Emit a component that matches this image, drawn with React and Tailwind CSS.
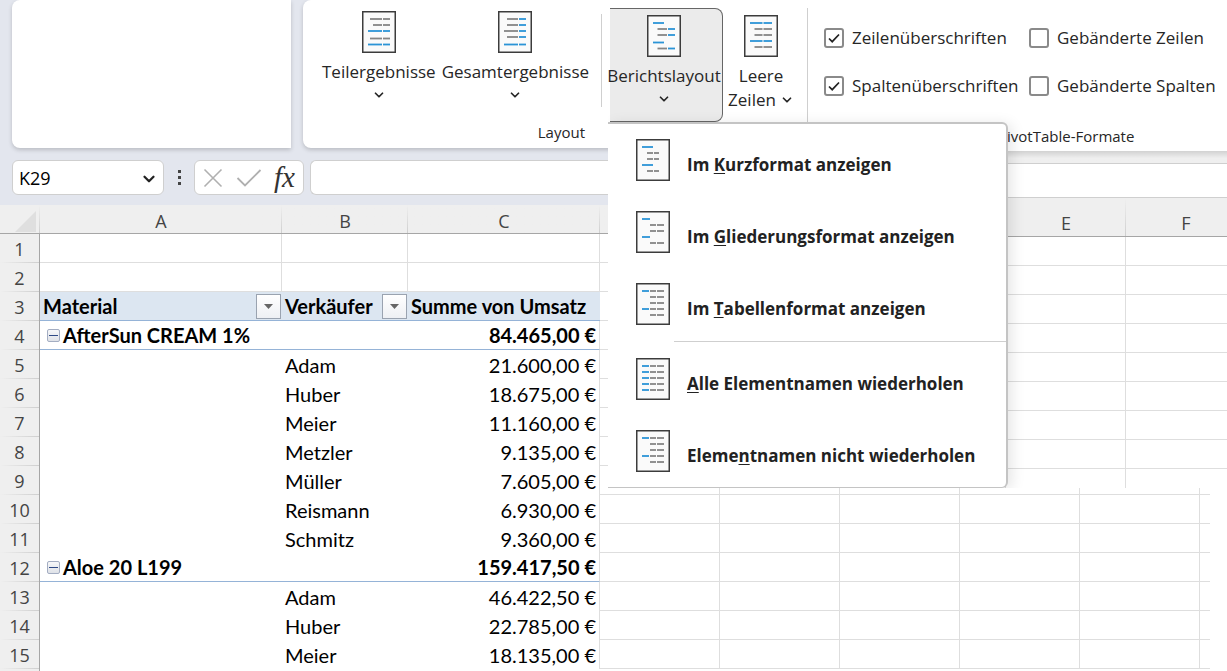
import React from "react";
import { ChevronDown } from "lucide-react";

const BLUE = "#2b94d6";
const GRAY = "#858585";

// every entry is one dash: [x1, x2, y, color]
const row = (y, ...dashes) => dashes.map(([x1, x2, color]) => [x1, x2, y, color]);

const tabular = [
  ...row(8, [6, 13, BLUE], [14, 20, GRAY], [21, 28, GRAY]),
  ...row(14, [14, 20, GRAY], [21, 28, GRAY]),
  ...row(20, [14, 20, GRAY], [21, 28, GRAY]),
  ...row(26, [6, 13, BLUE], [14, 20, GRAY], [21, 28, GRAY]),
  ...row(32, [14, 20, GRAY], [21, 28, GRAY]),
];

const ICONS = {
  subtotals: [
    ...row(8, [8, 20, GRAY], [21, 28, GRAY]),
    ...row(14, [11, 20, GRAY], [21, 28, GRAY]),
    ...row(20, [6, 20, BLUE], [21, 28, BLUE]),
    ...row(27.5, [8, 20, GRAY], [21, 28, GRAY]),
    ...row(33.5, [6, 20, BLUE], [21, 28, BLUE]),
  ],
  totals: [
    ...row(8, [9, 20, GRAY], [21, 28, BLUE]),
    ...row(14, [9, 20, GRAY], [21, 28, BLUE]),
    ...row(20, [6, 20, GRAY], [21, 28, BLUE]),
    ...row(26, [9, 20, GRAY], [21, 28, BLUE]),
    ...row(33.5, [6, 20, BLUE], [21, 28, BLUE]),
  ],
  report: [
    ...row(8, [6, 17, BLUE]),
    ...row(14, [10.5, 20, GRAY], [21, 28, BLUE]),
    ...row(20, [10.5, 20, GRAY], [21, 28, BLUE]),
    ...row(27.5, [6, 17, BLUE]),
    ...row(33.5, [10.5, 20, GRAY], [21, 28, BLUE]),
  ],
  blank: [
    ...row(8, [6, 18.5, BLUE], [19.5, 28, BLUE]),
    ...row(14, [10.5, 18.5, GRAY], [19.5, 28, GRAY]),
    ...row(20, [10.5, 18.5, GRAY], [19.5, 28, GRAY]),
    ...row(26, [6, 18.5, BLUE], [19.5, 28, BLUE]),
    ...row(32, [10.5, 18.5, GRAY], [19.5, 28, GRAY]),
  ],
  compact: [
    ...row(8, [6, 17, BLUE]),
    ...row(14, [11, 17, GRAY], [18, 23, GRAY]),
    ...row(20, [11, 17, GRAY], [18, 23, GRAY]),
    ...row(26, [6, 17, BLUE]),
    ...row(32, [11, 17, GRAY], [18, 23, GRAY]),
  ],
  outline: [
    ...row(8, [6, 14, BLUE]),
    ...row(14, [14, 20, GRAY], [21, 28, GRAY]),
    ...row(20, [14, 20, GRAY], [21, 28, GRAY]),
    ...row(26, [6, 14, BLUE]),
    ...row(32, [14, 20, GRAY], [21, 28, GRAY]),
  ],
  tabular,
  repeat: [8, 14, 20, 26, 32].flatMap((y) =>
    row(y, [6, 13, BLUE], [14, 20, GRAY], [21, 28, GRAY])
  ),
  noRepeat: tabular,
};

function ReportIcon({ name }) {
  return (
    <svg width="34" height="42" viewBox="0 0 34 42" fill="none" className="shrink-0" aria-hidden="true">
      <rect x="0.75" y="0.75" width="32.5" height="40.5" fill="#fafafa" stroke="#3c3c3c" strokeWidth="1.5" />
      {ICONS[name].map(([x1, x2, y, color], i) => (
        <line key={i} x1={x1} x2={x2} y1={y} y2={y} stroke={color} strokeWidth="1.8" />
      ))}
    </svg>
  );
}

function RibbonButton({ icon, label }) {
  return (
    <button type="button" className="flex flex-col items-center whitespace-nowrap">
      <ReportIcon name={icon} />
      <span className="mt-[7px] leading-6">{label}</span>
      <ChevronDown className="mt-1 size-3.5" strokeWidth={3} />
    </button>
  );
}

function CheckOption({ id, label, checked }) {
  return (
    <div className="flex items-center gap-2 leading-6">
      <span className="grid size-5 place-items-center">
        <input
          id={id}
          type="checkbox"
          defaultChecked={checked}
          className="peer col-start-1 row-start-1 size-5 appearance-none rounded-[3px] border-2 border-[#8a8a8a] bg-white"
        />
        <svg
          viewBox="0 0 20 20"
          fill="none"
          className="pointer-events-none invisible col-start-1 row-start-1 size-5 peer-checked:visible"
        >
          <path d="M5 10.5l3.2 3.2L15 6.5" stroke="#222" strokeWidth="1.7" />
        </svg>
      </span>
      <label htmlFor={id} className="whitespace-nowrap">
        {label}
      </label>
    </div>
  );
}

const menuItems = [
  { icon: "compact", before: "Im ", key: "K", after: "urzformat anzeigen" },
  { icon: "outline", before: "Im ", key: "G", after: "liederungsformat anzeigen" },
  { icon: "tabular", before: "Im ", key: "T", after: "abellenformat anzeigen" },
  { icon: "repeat", before: "", key: "A", after: "lle Elementnamen wiederholen", separator: true },
  { icon: "noRepeat", before: "Eleme", key: "n", after: "tnamen nicht wiederholen" },
];

function LayoutMenu() {
  return (
    <div
      role="menu"
      className="absolute top-[122px] left-0 w-[400px] rounded-r-md border-t-2 border-r-2 border-b border-[#c4c4c4] bg-white shadow-[4px_2px_14px_rgba(0,0,0,0.10)]"
    >
      {menuItems.map((item) => (
        <React.Fragment key={item.icon}>
          {item.separator && <div role="separator" className="my-px ml-[66px] h-px bg-[#cfcfcf]" />}
          <button
            type="button"
            role="menuitem"
            className="flex h-[72px] w-full items-center gap-[17px] pl-7 text-left font-bold text-[#222]"
          >
            <ReportIcon name={item.icon} />
            <span className="pt-2.5 whitespace-nowrap">
              {item.before}
              <span className="underline decoration-1 underline-offset-2">{item.key}</span>
              {item.after}
            </span>
          </button>
        </React.Fragment>
      ))}
    </div>
  );
}

const sheetRows = [
  {},
  {},
  { type: "header", a: "Material", b: "Verkäufer", c: "Summe von Umsatz" },
  { type: "group", a: "AfterSun CREAM 1%", c: "84.465,00 €" },
  { type: "item", b: "Adam", c: "21.600,00 €" },
  { type: "item", b: "Huber", c: "18.675,00 €" },
  { type: "item", b: "Meier", c: "11.160,00 €" },
  { type: "item", b: "Metzler", c: "9.135,00 €" },
  { type: "item", b: "Müller", c: "7.605,00 €" },
  { type: "item", b: "Reismann", c: "6.930,00 €" },
  { type: "item", b: "Schmitz", c: "9.360,00 €" },
  { type: "group", a: "Aloe 20 L199", c: "159.417,50 €" },
  { type: "item", b: "Adam", c: "46.422,50 €" },
  { type: "item", b: "Huber", c: "22.785,00 €" },
  { type: "item", b: "Meier", c: "18.135,00 €" },
];

const colHead =
  "border-b border-[#a6a6a6] bg-[linear-gradient(to_bottom,transparent,#cfcfcf)] bg-[length:1px_100%] bg-right bg-no-repeat p-0 pt-1 text-lg leading-6 font-normal";
const rowHead =
  "h-[29px] border-r border-[#a6a6a6] bg-[linear-gradient(to_right,transparent,#cfcfcf)] bg-[length:100%_1px] bg-bottom bg-no-repeat p-0 text-center font-normal text-[#444]";
const gridCell = "h-[29px] border-r border-b border-[#dedede] bg-white p-0";

function FilterButton({ label }) {
  return (
    <button
      type="button"
      aria-label={label}
      className="grid size-[25px] shrink-0 place-items-center border border-[#9aa3b0] bg-linear-to-b from-white to-[#eef0f4]"
    >
      <svg width="9" height="5" viewBox="0 0 9 5">
        <path d="M0 0h9L4.500 5z" fill="#666" />
      </svg>
    </button>
  );
}

function PivotCells({ data }) {
  if (!data.type) {
    return (
      <>
        <td className={gridCell} />
        <td className={gridCell} />
        <td className={gridCell} />
      </>
    );
  }
  if (data.type === "header") {
    const cell = "h-[29px] border-b border-[#95b3d7] bg-[#dce6f1] p-0 pl-[3px] text-left font-bold";
    return (
      <>
        <td className={cell}>
          <div className="flex items-center justify-between pr-px">
            {data.a}
            <FilterButton label="Material filtern" />
          </div>
        </td>
        <td className={cell}>
          <div className="flex items-center justify-between pr-px">
            {data.b}
            <FilterButton label="Verkäufer filtern" />
          </div>
        </td>
        <td className={cell}>{data.c}</td>
      </>
    );
  }
  if (data.type === "group") {
    const cell = "h-[29px] border-b border-[#95b3d7] bg-white p-0 font-bold";
    return (
      <>
        <td className={cell}>
          <div className="flex items-center gap-[3px] pl-[7px]">
            <button
              type="button"
              aria-label="Gruppe reduzieren"
              className="grid size-[13px] place-items-center rounded-xs border border-[#a3adc2] bg-linear-to-b from-[#f6f7f9] to-[#dfe2e8]"
            >
              <span className="h-px w-[9px] bg-[#2f4a86]" />
            </button>
            {data.a}
          </div>
        </td>
        <td className={cell} />
        <td className={`${cell} border-r border-r-[#dedede] pr-[3px] text-right`}>{data.c}</td>
      </>
    );
  }
  return (
    <>
      <td className="h-[29px] bg-white p-0" />
      <td className="h-[29px] bg-white p-0 pl-[3px]">{data.b}</td>
      <td className="h-[29px] border-r border-[#dedede] bg-white p-0 pr-[3px] text-right">{data.c}</td>
    </>
  );
}

function Sheet() {
  return (
    <main className="flex-1 overflow-hidden bg-white">
      <div className="bg-linear-to-r from-[#efefef] from-[1210px] to-white to-[1210px]">
        <table className="w-[1210px] table-fixed border-separate border-spacing-0 font-['Lato',sans-serif] text-[20px] leading-6 text-black">
          <colgroup>
            <col className="w-10" />
            <col className="w-[242px]" />
            <col className="w-[126px]" />
            <col className="w-[192px]" />
            <col className="w-[120px]" />
            <col className="w-[120px]" />
            <col className="w-[120px]" />
            <col className="w-[120px]" />
            <col className="w-[120px]" />
            <col />
          </colgroup>
          <thead className="font-['Open_Sans',sans-serif] text-[#444]">
            <tr>
              <td className={colHead}>
                <svg width="21" height="21" viewBox="0 0 21 21" className="mr-1 ml-auto">
                  <path d="M21 0v21H0z" fill="#dfdfdf" />
                </svg>
              </td>
              <th className={colHead}>A</th>
              <th className={colHead}>B</th>
              <th className={colHead}>C</th>
              {[0, 1, 2, 3, 4, 5].map((n) => (
                <td key={n} className={colHead} />
              ))}
            </tr>
          </thead>
          <tbody>
            {sheetRows.map((data, i) => (
              <tr key={i}>
                <th className={`${rowHead} font-['Open_Sans',sans-serif] text-lg`}>{i + 1}</th>
                <PivotCells data={data} />
                {[0, 1, 2, 3, 4].map((n) => (
                  <td key={n} className={gridCell} />
                ))}
                <td className="h-[29px] border-b border-[#dedede] bg-white p-0" />
              </tr>
            ))}
          </tbody>
        </table>
      </div>
      <div className="h-8 w-10 border-r border-[#a6a6a6] bg-[#efefef]" />
    </main>
  );
}

function FormulaBar() {
  return (
    <div className="flex h-[57px] items-center pt-0.5 pl-3">
      <div className="relative w-[152px]">
        <select
          aria-label="Namenfeld"
          className="h-[35px] w-full appearance-none rounded-md border border-[#cfcfcf] bg-white pl-1.5 text-lg text-black"
        >
          <option>K29</option>
        </select>
        <ChevronDown className="pointer-events-none absolute top-2.5 right-1.5 size-[18px] text-[#222]" strokeWidth={3} />
      </div>
      <div className="flex w-[30px] flex-col items-center gap-[3px]">
        <span className="size-[3px] bg-[#444]" />
        <span className="size-[3px] bg-[#444]" />
        <span className="size-[3px] bg-[#444]" />
      </div>
      <div className="flex h-[35px] w-[110px] items-center justify-between rounded-md border border-[#cfcfcf] bg-white px-2">
        <button type="button" aria-label="Abbrechen">
          <svg width="20" height="20" viewBox="0 0 20 20" fill="none" stroke="#b0b0b0" strokeWidth="1.6">
            <path d="M1.500 1.500l17 17M18.500 1.500l-17 17" />
          </svg>
        </button>
        <button type="button" aria-label="Eingeben">
          <svg width="26" height="20" viewBox="0 0 26 20" fill="none" stroke="#b0b0b0" strokeWidth="1.800">
            <path d="M1.500 10l7.500 7.500L24.500 2" />
          </svg>
        </button>
        <button type="button" className="font-['Liberation_Serif',serif] text-[29px] leading-none text-[#333] italic">
          fx
        </button>
      </div>
      <input
        type="text"
        aria-label="Bearbeitungsleiste"
        className="ml-1.5 h-[35px] min-w-0 flex-1 rounded-l-md border border-r-0 border-[#cfcfcf] bg-white"
      />
    </div>
  );
}

// right part of the window with the opened "Berichtslayout" menu
function ReportLayoutPanel() {
  return (
    <section className="absolute top-0 right-0 left-[608px] h-[488px] overflow-hidden bg-white">
      <div className="h-[151px] pt-2 pl-0.5">
        <div className="flex h-[114px]">
          <div className="flex w-[113px] justify-center rounded-r-lg border border-l-0 border-[#666] bg-[#ebebeb] pt-1.5 pr-1">
            <RibbonButton icon="report" label="Berichtslayout" />
          </div>
          <button type="button" className="mt-[7px] flex w-[76px] flex-col items-center self-start leading-6">
            <ReportIcon name="blank" />
            <span className="mt-[7px]">Leere</span>
            <span className="flex items-center gap-1">
              Zeilen <ChevronDown className="size-3.5" strokeWidth={3} />
            </span>
          </button>
          <div className="ml-2 w-px bg-[#cfcfcf]" />
          <div className="grid grid-cols-[205px_auto] content-start gap-y-6 pt-[18px] pl-4">
            <CheckOption id="row-headers" label="Zeilenüberschriften" checked />
            <CheckOption id="banded-rows" label="Gebänderte Zeilen" />
            <CheckOption id="col-headers" label="Spaltenüberschriften" checked />
            <CheckOption id="banded-cols" label="Gebänderte Spalten" />
          </div>
        </div>
        <p className="pl-[388px] text-[15px] leading-7">PivotTable-Formate</p>
      </div>
      <div className="bg-[#efefef]">
        <div className="h-[13px] border-b border-[#cfcfcf] bg-linear-to-b from-[#d2d2d2] to-[#efefef] to-60%" />
        <input
          type="text"
          aria-label="Bearbeitungsleiste rechts"
          className="block h-[34px] w-full border-b border-[#cfcfcf] bg-white"
        />
        <table className="w-[638px] table-fixed border-separate border-spacing-0 leading-6 text-[#444]">
          <colgroup>
            <col className="w-[398px]" />
            <col className="w-[120px]" />
            <col className="w-[120px]" />
          </colgroup>
          <thead>
            <tr className="h-[39px]">
              <td className={colHead} />
              <th className={`${colHead} pt-3`}>E</th>
              <th className={`${colHead} pt-3`}>F</th>
            </tr>
          </thead>
          <tbody>
            {[0, 1, 2, 3, 4, 5, 6, 7, 8].map((n) => (
              <tr key={n}>
                <td className={gridCell} />
                <td className={gridCell} />
                <td className={gridCell} />
              </tr>
            ))}
          </tbody>
        </table>
      </div>
      <LayoutMenu />
    </section>
  );
}

export default function App() {
  return (
    <div className="relative flex h-screen flex-col overflow-hidden bg-[#e3e6ee] font-['Open_Sans',sans-serif] text-[17px] text-[#262626]">
      <header className="flex h-[148px] gap-3 pl-3">
        <div className="w-[279px] rounded-l-lg bg-white shadow-[0_2px_4px_rgba(0,0,0,0.18)]" />
        <div className="flex-1 rounded-l-lg bg-white shadow-[0_2px_4px_rgba(0,0,0,0.18)]">
          <div className="flex w-[299px] flex-col">
            <div className="flex h-[107px] gap-1.5 pt-[11px] pl-[19px]">
              <RibbonButton icon="subtotals" label="Teilergebnisse" />
              <RibbonButton icon="totals" label="Gesamtergebnisse" />
              <div className="mt-[3px] ml-auto w-px bg-[#cfcfcf]" />
            </div>
            <p className="mt-[11px] self-end pr-[17px] text-[15px] leading-7">Layout</p>
          </div>
        </div>
      </header>
      <FormulaBar />
      <Sheet />
      <ReportLayoutPanel />
    </div>
  );
}
